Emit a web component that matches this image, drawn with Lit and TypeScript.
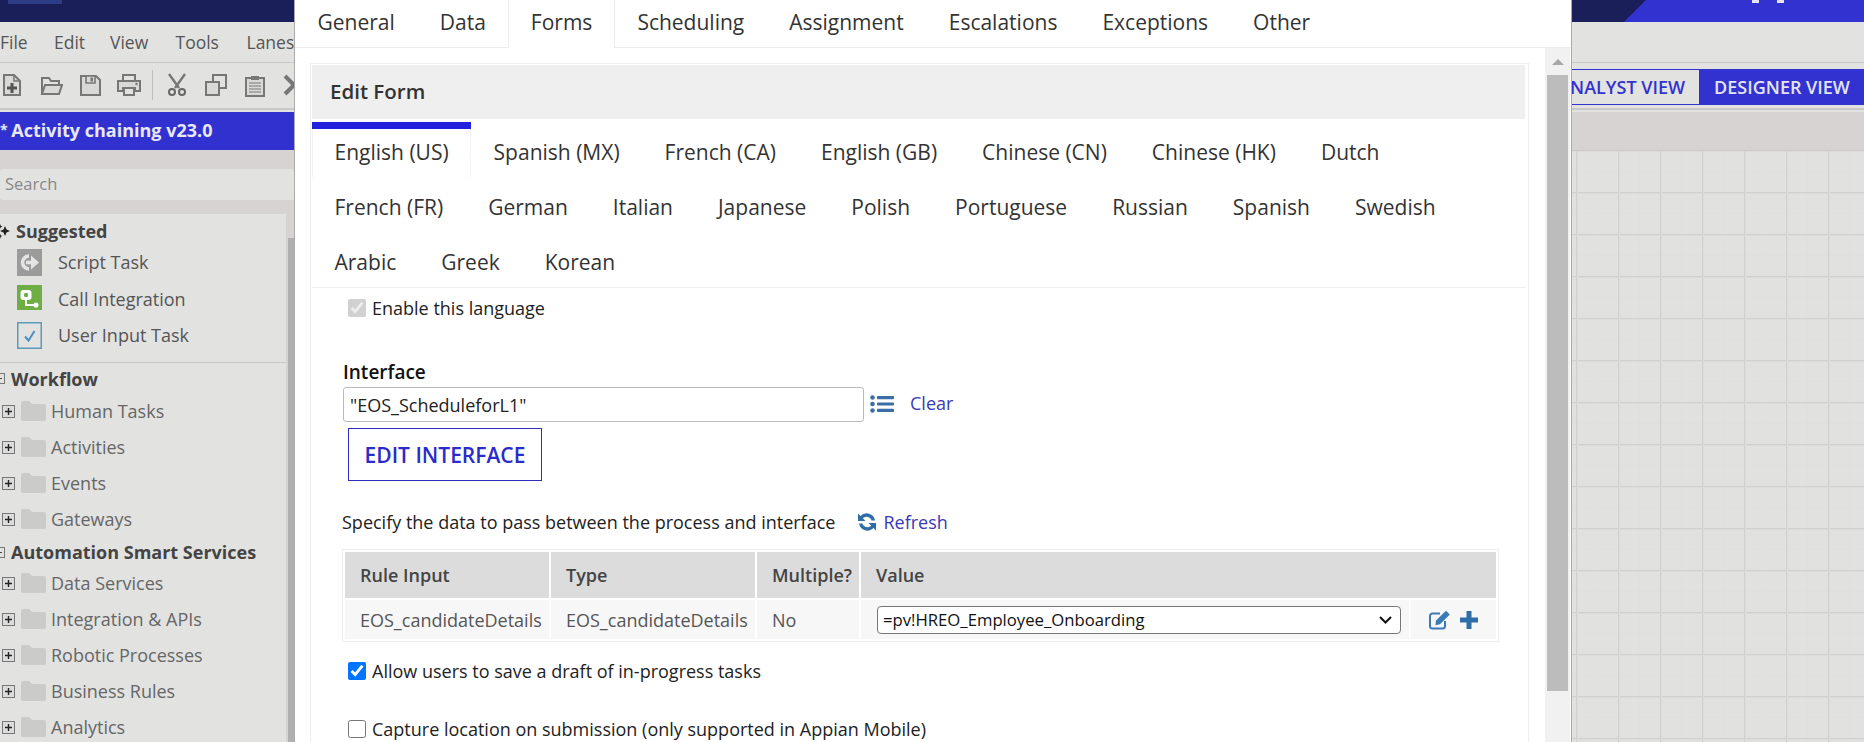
import { LitElement, html, css, svg } from "lit";
import { customElement } from "lit/decorators.js";

const FONT = css`"Open Sans", "Noto Sans", sans-serif`;

const MAIN_TABS = ["General", "Data", "Forms", "Scheduling", "Assignment", "Escalations", "Exceptions", "Other"];
const LANGUAGES = [
  "English (US)", "Spanish (MX)", "French (CA)", "English (GB)", "Chinese (CN)", "Chinese (HK)", "Dutch",
  "French (FR)", "German", "Italian", "Japanese", "Polish", "Portuguese", "Russian", "Spanish", "Swedish",
  "Arabic", "Greek", "Korean",
];
const MENU = ["File", "Edit", "View", "Tools", "Lanes"];

const ICON_COLOR = "#777";

// toolbar icons, 24x24 viewbox
const TOOL_ICONS = {
  add: svg`<path d="M4 2h10l6 6v14H4z" fill="#d9d9d8" stroke="${ICON_COLOR}" stroke-width="2"/><path d="M14 2v6h6" fill="none" stroke="${ICON_COLOR}" stroke-width="1.5"/><path d="M7 13.5h10v3H7zM10.500 10h3v10h-3z" fill="#555"/>`,
  open: svg`<path d="M3 21V5h7l2 3h8v4" fill="none" stroke="${ICON_COLOR}" stroke-width="2"/><path d="M3 21l3-9h17l-3 9z" fill="#d9d9d8" stroke="${ICON_COLOR}" stroke-width="2"/>`,
  save: svg`<path d="M3 3h15l4 4v15H3z" fill="#d9d9d8" stroke="${ICON_COLOR}" stroke-width="2"/><path d="M8 3h9v7H8z" fill="#d9d9d8" stroke="${ICON_COLOR}" stroke-width="1.6"/><path d="M12.500 4.500h2.500v4h-2.500z" fill="${ICON_COLOR}"/>`,
  print: svg`<path d="M6 8V2h12v6" fill="none" stroke="${ICON_COLOR}" stroke-width="2"/><path d="M1 8h22v10h-5v-3H6v3H1z" fill="#d9d9d8" stroke="${ICON_COLOR}" stroke-width="2"/><path d="M7 15h10v7H7z" fill="#e2e2e1" stroke="${ICON_COLOR}" stroke-width="2"/><circle cx="19.500" cy="11" r="1.200" fill="${ICON_COLOR}"/>`,
  cut: svg`<path d="M4 1l10 14M20 1L10 15" fill="none" stroke="${ICON_COLOR}" stroke-width="2.400"/><circle cx="7" cy="19" r="3" fill="none" stroke="#666" stroke-width="2"/><circle cx="17" cy="19" r="3" fill="none" stroke="#666" stroke-width="2"/>`,
  copy: svg`<path d="M9 2h13v13H9z" fill="#e2e2e1" stroke="${ICON_COLOR}" stroke-width="2"/><path d="M2 9h13v13H2z" fill="#d9d9d8" stroke="${ICON_COLOR}" stroke-width="2"/>`,
  paste: svg`<path d="M3 5h18v18H3z" fill="#d9d9d8" stroke="${ICON_COLOR}" stroke-width="2"/><path d="M8 3h8v4H8z" fill="${ICON_COLOR}"/><path d="M6 10h12M6 13h12M6 16h12M6 19h12" stroke="#999" stroke-width="1.400"/>`,
  remove: svg`<path d="M3 3l18 18M21 3L3 21" fill="none" stroke="${ICON_COLOR}" stroke-width="4"/>`,
};

const SUGGESTED = [
  {
    label: "Script Task",
    icon: svg`<rect width="25" height="27" fill="#9b9b9b"/><path d="M12 7A6.500 6.500 0 0 0 12 20" fill="none" stroke="#e4e4e4" stroke-width="3.600"/><path d="M9 13.500h6" stroke="#e4e4e4" stroke-width="3.600"/><path d="M14 6.500l8 7-8 7z" fill="#e4e4e4"/>`,
  },
  {
    label: "Call Integration",
    icon: svg`<rect width="25" height="25" fill="#6fae45"/><rect x="3.500" y="5" width="11" height="10" rx="3" fill="#fff"/><circle cx="9" cy="10" r="2.200" fill="#6fae45"/><path d="M9 13v7h9" fill="none" stroke="#fff" stroke-width="1.800"/><circle cx="19" cy="20" r="2.600" fill="#fff"/>`,
  },
  {
    label: "User Input Task",
    icon: svg`<rect x=".75" y=".75" width="23.500" height="25.500" fill="none" stroke="#5b9abb" stroke-width="1.500"/><path d="M8 14.500l3.500 4L17.500 9" fill="none" stroke="#4a90c2" stroke-width="2"/>`,
  },
];

const GROUPS = [
  { title: "Workflow", items: ["Human Tasks", "Activities", "Events", "Gateways"] },
  {
    title: "Automation Smart Services",
    items: ["Data Services", "Integration & APIs", "Robotic Processes", "Business Rules", "Analytics"],
  },
];

@customElement("form-dialog")
export class FormDialog extends LitElement {
  static styles = css`
    :host {
      display: flex;
      flex-direction: column;
      background: #fff;
      border-left: 1px solid #aaa;
      border-right: 1px solid #aaa;
      font-family: ${FONT};
      color: #222;
      overflow: hidden;
    }
    .tabs {
      display: flex;
      height: 47px;
      flex: none;
      border-bottom: 1px solid #ececec;
      font-size: 21px;
      color: #333;
    }
    .tab {
      padding: 0 22.500px;
      line-height: 45px;
      white-space: nowrap;
    }
    .tab.on {
      background: #fff;
      height: 48px;
      box-shadow: inset 1px 0 #ececec, inset -1px 0 #ececec;
    }
    .body {
      display: flex;
      flex: 1;
      min-height: 0;
    }
    .panel {
      width: 1219px;
      margin: 15px 0 0 15px;
      padding: 1px 3px 0 1px;
      border: 1px solid #eee;
      border-bottom: 0;
      box-sizing: border-box;
    }
    .heading {
      height: 54px;
      line-height: 52px;
      padding-left: 18px;
      background: #efefef;
      font-size: 20.500px;
      font-weight: 600;
      color: #333;
    }
    .langs {
      display: flex;
      flex-wrap: wrap;
      row-gap: 2px;
      margin-top: 3px;
      padding: 0 0 2px;
      border-bottom: 1px solid #eee;
      font-size: 21px;
    }
    .lang {
      box-sizing: border-box;
      height: 53px;
      line-height: 46px;
      padding: 0 22.500px;
      border-top: 7px solid transparent;
      white-space: nowrap;
      color: #333;
    }
    .lang.on {
      height: 55px;
      margin-bottom: -2px;
      border-top-color: #2222dd;
      box-shadow: inset 1px 0 #f2f2f2, inset -1px 0 #f2f2f2;
    }
    .form {
      padding: 11px 0 0 32px;
      font-size: 18px;
    }
    .check {
      display: flex;
      align-items: center;
      gap: 6px;
      height: 18px;
      margin-left: 4px;
      white-space: nowrap;
    }
    .check input {
      width: 18px;
      height: 18px;
      margin: 0;
    }
    .label {
      margin: 43px 0 0 -1px;
      line-height: 24px;
      font-weight: 600;
      font-size: 19px;
      color: #111;
    }
    .picker {
      display: flex;
      align-items: center;
      margin-top: 3px;
      margin-left: -1px;
    }
    .picker input {
      width: 521px;
      height: 35px;
      box-sizing: border-box;
      padding: 0 6px;
      border: 1px solid #bbb;
      border-radius: 3px;
      font: 18px ${FONT};
      color: #222;
    }
    .picker svg {
      margin: -2px 0 0 6px;
    }
    .link {
      color: #3a3ab4;
    }
    .picker .link {
      margin: -4px 0 0 16px;
    }
    .edit {
      display: flex;
      align-items: center;
      justify-content: center;
      width: 194px;
      height: 53px;
      box-sizing: border-box;
      margin: 6px 0 0 4px;
      border: 1px solid #2d2db8;
      color: #2b2bcc;
      font-size: 21px;
      font-weight: 600;
    }
    .specify {
      display: flex;
      align-items: center;
      height: 24px;
      margin: 29px 0 0 -2px;
    }
    .specify svg {
      margin: 0 6px 0 22px;
    }
    .grid {
      display: grid;
      grid-template-columns: 204px 204px 102px 548px 85px;
      grid-template-rows: 46px 39px;
      gap: 2px;
      width: max-content;
      padding: 2px;
      margin: 15px 0 0 -2px;
      border: 1px solid #eee;
      font-size: 18px;
      background: #fff;
    }
    .grid > div {
      display: flex;
      align-items: center;
      padding-left: 15px;
      background: #f7f7f7;
      color: #555;
      white-space: nowrap;
      overflow: hidden;
    }
    .grid .head {
      background: #dcdcdc;
      color: #444;
      font-weight: 600;
    }
    .grid .wide {
      grid-column: span 2;
    }
    .grid .cell-select {
      padding-left: 16px;
    }
    .grid .actions {
      padding-left: 18px;
      gap: 8px;
    }
    select {
      appearance: none;
      width: 524px;
      height: 28px;
      box-sizing: border-box;
      padding: 0 0 0 5px;
      background: #fff url("data:image/svg+xml,%3Csvg xmlns='http://www.w3.org/2000/svg' width='13' height='8'%3E%3Cpath d='M1 1l5.500 5.500L12 1' fill='none' stroke='%23111' stroke-width='2'/%3E%3C/svg%3E") no-repeat right 8px center;
      border: 1px solid #777;
      border-radius: 4px;
      font: 16.700px ${FONT};
      color: #111;
    }
    .allow {
      margin-top: 20px;
    }
    .capture {
      margin-top: 40px;
    }
    .scroll {
      display: flex;
      flex-direction: column;
      align-items: center;
      width: 25px;
      margin-left: 16px;
      background: #f1f1f1;
      flex: none;
    }
    .up {
      width: 0;
      height: 0;
      margin: 11px 0 10px;
      border: 6px solid transparent;
      border-top: 0;
      border-bottom: 6px solid #a8a8a8;
      flex: none;
    }
    .thumb {
      width: 21px;
      height: 616px;
      background: #bcbcbc;
      flex: none;
    }
  `;

  render() {
    return html`
      <div class="tabs">
        ${MAIN_TABS.map((t) => html`<div class="tab ${t === "Forms" ? "on" : ""}">${t}</div>`)}
      </div>
      <div class="body">
        <div class="panel">
          <div class="heading">Edit Form</div>
          <div class="langs">
            ${LANGUAGES.map((l, i) => html`<div class="lang ${i === 0 ? "on" : ""}">${l}</div>`)}
          </div>
          <div class="form">
            <label class="check"><input type="checkbox" checked disabled />Enable this language</label>
            <div class="label">Interface</div>
            <div class="picker">
              <input type="text" .value=${'"EOS_ScheduleforL1"'} />
              <svg width="24" height="18" viewBox="0 0 24 18">
                <g fill="#3a6ea5">
                  <circle cx="2.500" cy="2.500" r="2.300"/><circle cx="2.500" cy="9" r="2.300"/><circle cx="2.500" cy="15.500" r="2.300"/>
                  <rect x="7" y="1" width="17" height="3.200" rx=".8"/><rect x="7" y="7.400" width="17" height="3.200" rx=".8"/><rect x="7" y="13.800" width="17" height="3.200" rx=".8"/>
                </g>
              </svg>
              <span class="link">Clear</span>
            </div>
            <div class="edit">EDIT INTERFACE</div>
            <div class="specify">
              Specify the data to pass between the process and interface
              <svg width="20" height="20" viewBox="0 0 20 20">
                <path d="M18 8.500A8.500 8.500 0 0 0 3.500 4L1 1.500V9h7.500L5.800 6.300A5.300 5.300 0 0 1 14.600 8.500zM2 11.500A8.500 8.500 0 0 0 16.500 16l2.500 2.500V11h-7.500l2.700 2.700A5.300 5.300 0 0 1 5.400 11.500z" fill="#2f6da8"/>
              </svg>
              <span class="link">Refresh</span>
            </div>
            <div class="grid">
              <div class="head">Rule Input</div>
              <div class="head">Type</div>
              <div class="head">Multiple?</div>
              <div class="head wide">Value</div>
              <div>EOS_candidateDetails</div>
              <div>EOS_candidateDetails</div>
              <div>No</div>
              <div class="cell-select">
                <select><option>=pv!HREO_Employee_Onboarding</option></select>
              </div>
              <div class="actions">
                <svg width="22" height="20" viewBox="0 0 22 20">
                  <path d="M16 11v5a2.500 2.500 0 0 1-2.500 2.500h-10A2.500 2.500 0 0 1 1 16V6a2.500 2.500 0 0 1 2.500-2.500H11" fill="none" stroke="#3a7ab5" stroke-width="2"/>
                  <path d="M7 10.500L17 .8l3.800 3.700-9.800 9.800-4.500 1z" fill="#3a7ab5"/>
                </svg>
                <svg width="20" height="20" viewBox="0 0 20 20">
                  <path d="M7.500 1h5v6.500H19v5h-6.500V19h-5v-6.500H1v-5h6.500z" fill="#2f6da8"/>
                </svg>
              </div>
            </div>
            <label class="check allow"><input type="checkbox" checked />Allow users to save a draft of in-progress tasks</label>
            <label class="check capture"><input type="checkbox" />Capture location on submission (only supported in Appian Mobile)</label>
          </div>
        </div>
        <div class="scroll"><div class="up"></div><div class="thumb"></div></div>
      </div>
    `;
  }
}

@customElement("app-root")
export class AppRoot extends LitElement {
  static styles = css`
    :host {
      display: block;
      position: relative;
      width: 1864px;
      height: 742px;
      overflow: hidden;
      font-family: ${FONT};
      background: #e2e2e1;
      color: #555;
    }
    .brand {
      display: flex;
      justify-content: space-between;
      height: 22px;
      background: #1a1f5a;
      overflow: hidden;
    }
    .logo {
      width: 54px;
      height: 4px;
      margin-left: 8px;
      background: #2c3d85;
    }
    .banner {
      display: flex;
      gap: 18px;
      width: 240px;
      padding-left: 128px;
      box-sizing: border-box;
      background: #3232d0;
      clip-path: polygon(22px 0, 100% 0, 100% 100%, 0 100%);
    }
    .banner i {
      width: 7px;
      height: 3px;
      background: #e4e4f4;
    }
    .menu {
      display: flex;
      gap: 21px;
      height: 39px;
      padding-bottom: 1px;
      align-items: center;
      border-bottom: 1px solid #c8c8c8;
      font-size: 17.500px;
    }
    .menu span:nth-child(1) { width: 33px; }
    .menu span:nth-child(2) { width: 35px; }
    .menu span:nth-child(3) { width: 44.500px; }
    .menu span:nth-child(4) { width: 50px; }
    .toolbar {
      display: flex;
      align-items: center;
      height: 45px;
      border-bottom: 2px solid #c8c8c8;
    }
    .tool {
      display: flex;
      justify-content: center;
      width: 39px;
      flex: none;
    }
    .tools {
      display: flex;
      align-items: center;
      margin-left: -8px;
      margin-top: -2px;
    }
    .sep {
      width: 1px;
      height: 30px;
      margin: 0 4px;
      background: #bdbdbd;
    }
    .views {
      display: flex;
      margin-left: auto;
      margin-top: 3px;
      font-size: 18px;
      font-weight: 600;
      line-height: 34px;
      white-space: nowrap;
    }
    .views div {
      padding: 0 14px;
      border: 1px solid #3232d0;
      border-right: 0;
      color: #3232d0;
    }
    .views .on {
      background: #3232d0;
      color: #e4e4f4;
      width: 165px;
      box-sizing: border-box;
      text-align: center;
      padding: 0;
    }
    .main {
      display: grid;
      grid-template-columns: 295px 1fr;
      height: 632px;
      padding-top: 2px;
      box-sizing: border-box;
    }
    .left {
      display: flex;
      flex-direction: column;
      background: #d6d3d2;
      min-height: 0;
    }
    .title {
      height: 38px;
      line-height: 36px;
      background: #3131cf;
      color: #e8e8f8;
      font-size: 18px;
      font-weight: 700;
      white-space: nowrap;
      flex: none;
    }
    .star {
      font-size: 14px;
      vertical-align: 2px;
      margin-right: -1px;
    }
    .search {
      height: 31px;
      line-height: 29px;
      margin-top: 19px;
      padding-left: 5px;
      background: #e2e2e1;
      border-radius: 3px;
      color: #888;
      font-size: 16.500px;
      flex: none;
    }
    .lower {
      display: flex;
      flex: 1;
      margin-top: 14px;
      min-height: 0;
    }
    .palette {
      width: 286px;
      background: #e2e2e1;
      overflow: hidden;
      flex: none;
    }
    .bar {
      width: 7px;
      margin: 24px 0 0 2px;
      background: #b0b0b0;
    }
    .suggested {
      display: flex;
      align-items: center;
      gap: 6px;
      height: 24px;
      margin-top: 5px;
      font-size: 18px;
      font-weight: 700;
      color: #444;
    }
    .suggested svg {
      flex: none;
      margin-left: -2px;
    }
    .pick {
      display: flex;
      align-items: center;
      gap: 16px;
      height: 36.500px;
      padding-left: 17px;
      font-size: 18px;
    }
    .picks {
      margin-top: 1px;
      padding-bottom: 8px;
      border-bottom: 1px solid #c8c8c8;
    }
    .group {
      display: flex;
      align-items: center;
      gap: 6px;
      height: 24px;
      margin: 4px 0 2.500px;
      font-size: 18px;
      font-weight: 700;
      color: #444;
    }
    .item + .group {
      margin: 3px 0 1px;
    }
    .minus {
      position: relative;
      width: 11px;
      height: 11px;
      margin-left: -6px;
      border: 1px solid #777;
      box-sizing: border-box;
      flex: none;
    }
    .minus::after {
      content: "";
      position: absolute;
      left: 2px;
      right: 2px;
      top: 4px;
      height: 1px;
      background: #444;
    }
    .item {
      display: flex;
      align-items: center;
      height: 36px;
      padding-left: 2px;
      font-size: 18px;
      color: #666;
      white-space: nowrap;
    }
    .item svg:first-child {
      margin-right: 6px;
    }
    .item svg:nth-child(2) {
      margin-right: 5px;
    }
    .right {
      display: flex;
      flex-direction: column;
      position: relative;
      min-height: 0;
    }
    .strip {
      height: 39px;
      background: #d6d3d2;
      border-bottom: 1px solid #cbc9c8;
      box-sizing: border-box;
      flex: none;
    }
    .canvas {
      flex: 1;
      position: relative;
      background-color: #e1e1e0;
      background-image:
        linear-gradient(to right, #d3d1d0 1px, #dddcdb 1px, #dddcdb 2px, transparent 2px),
        linear-gradient(to bottom, #d3d1d0 1px, #dddcdb 1px, #dddcdb 2px, transparent 2px),
        linear-gradient(to right, #dfdfde 1px, transparent 1px),
        linear-gradient(to bottom, #dfdfde 1px, transparent 1px);
      background-size: 42px 42px, 42px 42px, 21px 21px, 21px 21px;
      background-position: 21px 0, 0 -1px, 21px 0, 0 -1px;
    }
    .node {
      position: absolute;
      left: 1266px;
      top: 446px;
      color: #1a1f5a;
      font-size: 15px;
    }
    form-dialog {
      position: absolute;
      left: 294px;
      top: 0;
      width: 1278px;
      height: 742px;
      box-sizing: border-box;
    }
  `;

  plusBox() {
    return html`<svg width="13" height="13" viewBox="0 0 13 13">
      <rect x=".5" y=".5" width="12" height="12" fill="#dcdcdc" stroke="#777"/>
      <path d="M3 6.500h7M6.500 3v7" stroke="#222" stroke-width="1.400"/>
    </svg>`;
  }

  folder() {
    return html`<svg width="25" height="20" viewBox="0 0 25 20">
      <path d="M0 2a2 2 0 0 1 2-2h6l3 3h12a2 2 0 0 1 2 2v13a2 2 0 0 1-2 2H2a2 2 0 0 1-2-2z" fill="#cbcbca"/>
    </svg>`;
  }

  render() {
    const tools = Object.values(TOOL_ICONS);
    return html`
      <div class="brand">
        <div class="logo"></div>
        <div class="banner"><i></i><i></i></div>
      </div>
      <div class="menu">${MENU.map((m) => html`<span>${m}</span>`)}</div>
      <div class="toolbar">
        <div class="tools">
          ${tools.map(
            (t, i) => html`
              ${i === 4 ? html`<div class="sep"></div>` : ""}
              <div class="tool"><svg width="24" height="24" viewBox="0 0 24 24">${t}</svg></div>
            `
          )}
        </div>
        <div class="views">
          <div>ANALYST VIEW</div>
          <div class="on">DESIGNER VIEW</div>
        </div>
      </div>
      <div class="main">
        <div class="left">
          <div class="title"><span class="star">*</span> Activity chaining v23.0</div>
          <div class="search">Search</div>
          <div class="lower">
            <div class="palette">
              <div class="suggested">
                <svg width="12" height="16" viewBox="0 0 12 16">
                  <path d="M7 3l1.500 3.500L12 8 8.500 9.500 7 13 5.500 9.500 2 8l3.500-1.500z" fill="#222"/>
                  <path d="M2 1l.8 1.700L4.500 3.500 2.800 4.300 2 6l-.8-1.700L-.5 3.500l1.700-.8zM2 11l.8 1.200 1.200.8-1.200.8L2 16l-.8-1.200L0 14l1.200-.8z" fill="#222"/>
                </svg>
                Suggested
              </div>
              <div class="picks">
                ${SUGGESTED.map(
                  (s) => html`<div class="pick">
                    <svg width="25" height="27" viewBox="0 0 25 27">${s.icon}</svg>${s.label}
                  </div>`
                )}
              </div>
              ${GROUPS.map(
                (g) => html`
                  <div class="group"><span class="minus"></span>${g.title}</div>
                  ${g.items.map((it) => html`<div class="item">${this.plusBox()}${this.folder()}${it}</div>`)}
                `
              )}
            </div>
            <div class="bar"></div>
          </div>
        </div>
        <div class="right">
          <div class="strip"></div>
          <div class="canvas"><span class="node">e</span></div>
        </div>
      </div>
      <form-dialog></form-dialog>
    `;
  }
}
